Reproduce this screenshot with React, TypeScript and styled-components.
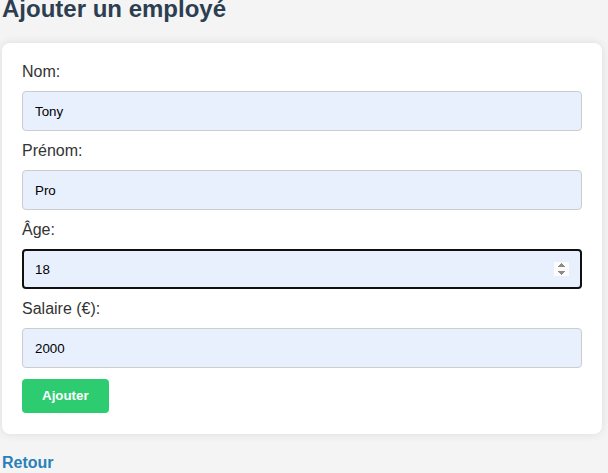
import React from "react";
import styled, { createGlobalStyle } from "styled-components";

const GlobalStyle = createGlobalStyle`
  html, body {
    margin: 0;
    padding: 0;
    background: #f4f4f4;
    font-family: "Liberation Sans", Arial, sans-serif;
    overflow: hidden;
  }
  * { box-sizing: border-box; }
`;

const Page = styled.div`
  padding: 0 6px 0 2px;
  margin-top: -5px;
`;

const Title = styled.h2`
  margin: 0 0 20px;
  font-size: 24px;
  font-weight: bold;
  color: #2c3e50;
`;

const Card = styled.form`
  background: #fff;
  border-radius: 8px;
  box-shadow: 0 0 10px rgba(0, 0, 0, 0.1);
  padding: 19px 20px 21px;
  display: flex;
  flex-direction: column;
  gap: 10px;
`;

const Label = styled.label`
  display: block;
  font-size: 16px;
  line-height: 19px;
  color: #333;
`;

const Input = styled.input<{ $focused?: boolean }>`
  display: block;
  width: 100%;
  height: 40px;
  padding: ${(p) => (p.$focused ? "9px 11px" : "10px 12px")};
  font-family: "Liberation Sans", Arial, sans-serif;
  font-size: 13.33px;
  color: #000;
  background: #e8f0fe;
  border: ${(p) => (p.$focused ? "2px solid #101010" : "1px solid #ccc")};
  border-radius: 4px;
  outline: none;
`;

const Button = styled.button`
  align-self: flex-start;
  margin-top: 1px;
  padding: 9px 20px 10px;
  font-family: "Liberation Sans", Arial, sans-serif;
  font-size: 13.33px;
  font-weight: bold;
  color: #fff;
  background: #2ecc71;
  border: none;
  border-radius: 4px;
  cursor: pointer;
`;

const Back = styled.a`
  display: inline-block;
  margin-top: 20px;
  font-size: 16px;
  font-weight: bold;
  color: #2980b9;
  text-decoration: none;
`;

export default function App() {
  return (
    <>
      <GlobalStyle />
      <Page>
        <Title>Ajouter un employé</Title>
        <Card onSubmit={(e) => e.preventDefault()}>
          <Label htmlFor="nom">Nom:</Label>
          <Input id="nom" type="text" defaultValue="Tony" />
          <Label htmlFor="prenom">Prénom:</Label>
          <Input id="prenom" type="text" defaultValue="Pro" />
          <Label htmlFor="age">Âge:</Label>
          <Input id="age" type="number" defaultValue="18" $focused autoFocus />
          <Label htmlFor="salaire">Salaire (€):</Label>
          <Input id="salaire" type="number" defaultValue="2000" />
          <Button type="submit">Ajouter</Button>
        </Card>
        <Back href="#">Retour</Back>
      </Page>
    </>
  );
}
